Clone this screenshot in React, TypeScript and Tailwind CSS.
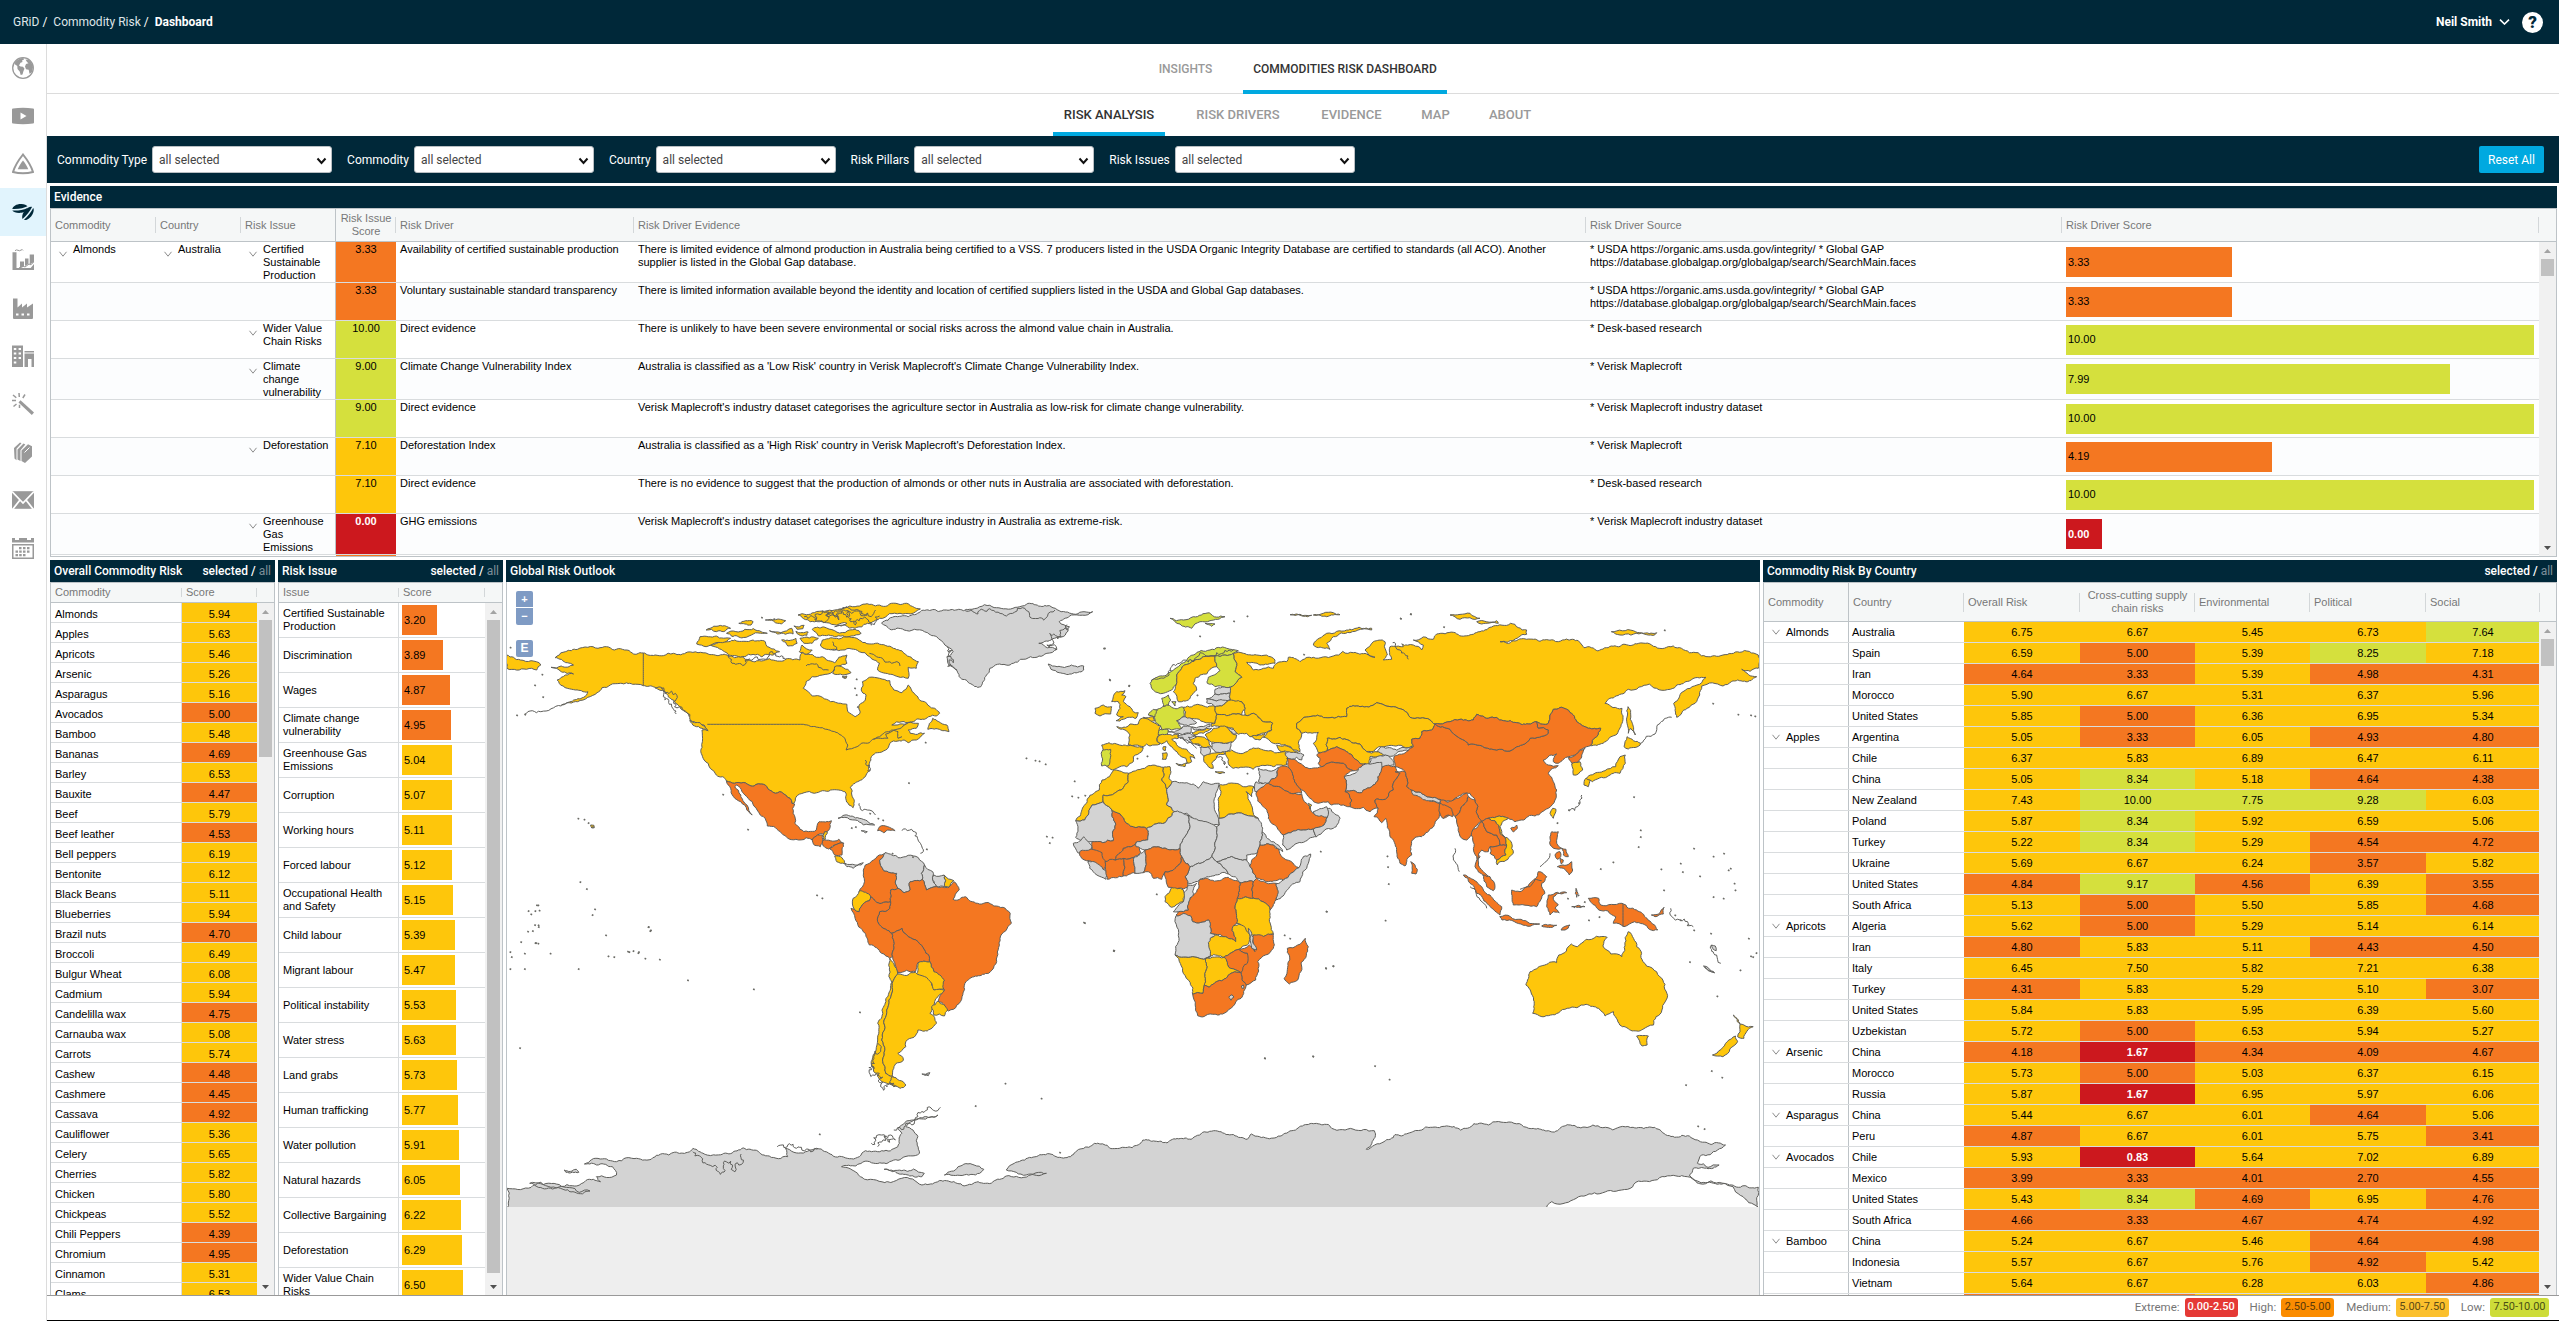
import React from "react";

/* ------------------------------------------------------------------ */
/* Score colours                                                       */
/* ------------------------------------------------------------------ */
const scoreBg = (v: number) =>
  v < 2.5 ? "bg-[#cc181e] text-white font-bold" : v <= 5 ? "bg-[#f47721]" : v <= 7.5 ? "bg-[#fec60b]" : "bg-[#d5e03d]";

/* ------------------------------------------------------------------ */
/* Data                                                                */
/* ------------------------------------------------------------------ */
type Ev = {
  h: "a" | "b";
  commodity?: string;
  country?: string;
  issue?: string;
  score: number;
  driver: string;
  text: string;
  source: string;
  value: number;
};

const evidence: Ev[] = [
  { h: "a", commodity: "Almonds", country: "Australia", issue: "Certified Sustainable Production", score: 3.33, driver: "Availability of certified sustainable production", text: "There is limited evidence of almond production in Australia being certified to a VSS. 7 producers listed in the USDA Organic Integrity Database are certified to standards (all ACO). Another supplier is listed in the Global Gap database.", source: "* USDA https://organic.ams.usda.gov/integrity/ * Global GAP https://database.globalgap.org/globalgap/search/SearchMain.faces", value: 3.33 },
  { h: "b", score: 3.33, driver: "Voluntary sustainable standard transparency", text: "There is limited information available beyond the identity and location of certified suppliers listed in the USDA and Global Gap databases.", source: "* USDA https://organic.ams.usda.gov/integrity/ * Global GAP https://database.globalgap.org/globalgap/search/SearchMain.faces", value: 3.33 },
  { h: "b", issue: "Wider Value Chain Risks", score: 10, driver: "Direct evidence", text: "There is unlikely to have been severe environmental or social risks across the almond value chain in Australia.", source: "* Desk-based research", value: 10 },
  { h: "a", issue: "Climate change vulnerability", score: 9, driver: "Climate Change Vulnerability Index", text: "Australia is classified as a 'Low Risk' country in Verisk Maplecroft's Climate Change Vulnerability Index.", source: "* Verisk Maplecroft", value: 7.99 },
  { h: "b", score: 9, driver: "Direct evidence", text: "Verisk Maplecroft's industry dataset categorises the agriculture sector in Australia as low-risk for climate change vulnerability.", source: "* Verisk Maplecroft industry dataset", value: 10 },
  { h: "b", issue: "Deforestation", score: 7.1, driver: "Deforestation Index", text: "Australia is classified as a 'High Risk' country in Verisk Maplecroft's Deforestation Index.", source: "* Verisk Maplecroft", value: 4.19 },
  { h: "b", score: 7.1, driver: "Direct evidence", text: "There is no evidence to suggest that the production of almonds or other nuts in Australia are associated with deforestation.", source: "* Desk-based research", value: 10 },
  { h: "a", issue: "Greenhouse Gas Emissions", score: 0, driver: "GHG emissions", text: "Verisk Maplecroft's industry dataset categorises the agriculture industry in Australia as extreme-risk.", source: "* Verisk Maplecroft industry dataset", value: 0 },
];

const commodities: [string, number][] = [
  ["Almonds", 5.94], ["Apples", 5.63], ["Apricots", 5.46], ["Arsenic", 5.26], ["Asparagus", 5.16], ["Avocados", 5.0],
  ["Bamboo", 5.48], ["Bananas", 4.69], ["Barley", 6.53], ["Bauxite", 4.47], ["Beef", 5.79], ["Beef leather", 4.53],
  ["Bell peppers", 6.19], ["Bentonite", 6.12], ["Black Beans", 5.11], ["Blueberries", 5.94], ["Brazil nuts", 4.7],
  ["Broccoli", 6.49], ["Bulgur Wheat", 6.08], ["Cadmium", 5.94], ["Candelilla wax", 4.75], ["Carnauba wax", 5.08],
  ["Carrots", 5.74], ["Cashew", 4.48], ["Cashmere", 4.45], ["Cassava", 4.92], ["Cauliflower", 5.36], ["Celery", 5.65],
  ["Cherries", 5.82], ["Chicken", 5.8], ["Chickpeas", 5.52], ["Chili Peppers", 4.39], ["Chromium", 4.95],
  ["Cinnamon", 5.31], ["Clams", 6.53],
];

const issues: [string, number][] = [
  ["Certified Sustainable Production", 3.2], ["Discrimination", 3.89], ["Wages", 4.87], ["Climate change vulnerability", 4.95],
  ["Greenhouse Gas Emissions", 5.04], ["Corruption", 5.07], ["Working hours", 5.11], ["Forced labour", 5.12],
  ["Occupational Health and Safety", 5.15], ["Child labour", 5.39], ["Migrant labour", 5.47], ["Political instability", 5.53],
  ["Water stress", 5.63], ["Land grabs", 5.73], ["Human trafficking", 5.77], ["Water pollution", 5.91],
  ["Natural hazards", 6.05], ["Collective Bargaining", 6.22], ["Deforestation", 6.29], ["Wider Value Chain Risks", 6.5],
];

const countries: [string, string, number[]][] = [
  ["Almonds", "Australia", [6.75, 6.67, 5.45, 6.73, 7.64]],
  ["", "Spain", [6.59, 5.0, 5.39, 8.25, 7.18]],
  ["", "Iran", [4.64, 3.33, 5.39, 4.98, 4.31]],
  ["", "Morocco", [5.9, 6.67, 5.31, 6.37, 5.96]],
  ["", "United States", [5.85, 5.0, 6.36, 6.95, 5.34]],
  ["Apples", "Argentina", [5.05, 3.33, 6.05, 4.93, 4.8]],
  ["", "Chile", [6.37, 5.83, 6.89, 6.47, 6.11]],
  ["", "China", [5.05, 8.34, 5.18, 4.64, 4.38]],
  ["", "New Zealand", [7.43, 10.0, 7.75, 9.28, 6.03]],
  ["", "Poland", [5.87, 8.34, 5.92, 6.59, 5.06]],
  ["", "Turkey", [5.22, 8.34, 5.29, 4.54, 4.72]],
  ["", "Ukraine", [5.69, 6.67, 6.24, 3.57, 5.82]],
  ["", "United States", [4.84, 9.17, 4.56, 6.39, 3.55]],
  ["", "South Africa", [5.13, 5.0, 5.5, 5.85, 4.68]],
  ["Apricots", "Algeria", [5.62, 5.0, 5.29, 5.14, 6.14]],
  ["", "Iran", [4.8, 5.83, 5.11, 4.43, 4.5]],
  ["", "Italy", [6.45, 7.5, 5.82, 7.21, 6.38]],
  ["", "Turkey", [4.31, 5.83, 5.29, 5.1, 3.07]],
  ["", "United States", [5.84, 5.83, 5.95, 6.39, 5.6]],
  ["", "Uzbekistan", [5.72, 5.0, 6.53, 5.94, 5.27]],
  ["Arsenic", "China", [4.18, 1.67, 4.34, 4.09, 4.67]],
  ["", "Morocco", [5.73, 5.0, 5.03, 6.37, 6.15]],
  ["", "Russia", [5.87, 1.67, 6.95, 5.97, 6.06]],
  ["Asparagus", "China", [5.44, 6.67, 6.01, 4.64, 5.06]],
  ["", "Peru", [4.87, 6.67, 6.01, 5.75, 3.41]],
  ["Avocados", "Chile", [5.93, 0.83, 5.64, 7.02, 6.89]],
  ["", "Mexico", [3.99, 3.33, 4.01, 2.7, 4.55]],
  ["", "United States", [5.43, 8.34, 4.69, 6.95, 4.76]],
  ["", "South Africa", [4.66, 3.33, 4.67, 4.74, 4.92]],
  ["Bamboo", "China", [5.24, 6.67, 5.46, 4.64, 4.98]],
  ["", "Indonesia", [5.57, 6.67, 5.76, 4.92, 5.42]],
  ["", "Vietnam", [5.64, 6.67, 6.28, 6.03, 4.86]],
  ["", "", [4.9, 4.9, 6, 4.9, 4.9]],
];

/* ------------------------------------------------------------------ */
/* World map                                                           */
/* ------------------------------------------------------------------ */
const Y = "#fec60b";
const O = "#f47721";
const L = "#d5e03d";
const G = "#d3d3d3";

type Frame = { sx: number; sy: number; ox: number; oy: number };
const frames: Record<string, Frame> = {
  A: { sx: 2.45, sy: 3, ox: 500, oy: 560 },
  B: { sx: 3, sy: 3, ox: 1100, oy: 600 },
  C: { sx: 2.376, sy: 3, ox: 1100, oy: 580 },
  D: { sx: 1.2444, sy: 3, ox: 500, oy: 900 },
};

const noise = (a: number, b: number) => {
  const s = Math.sin(a * 12.9898 + b * 78.233) * 43758.5453;
  return s - Math.floor(s) - 0.5;
};

type Pt = [number, number];

/* Midpoint displacement; the endpoints are ordered first, so that two
   countries which share a border get the same line. */
const split = (p: Pt, q: Pt, amp: number): Pt[] => {
  const len = Math.hypot(q[0] - p[0], q[1] - p[1]);
  if (len < 3) return [];
  const swap = p[0] > q[0] || (p[0] === q[0] && p[1] > q[1]);
  const [a, b] = swap ? [q, p] : [p, q];
  const n = noise(a[0] + b[0], a[1] + b[1]) * amp * 2;
  const m: Pt = [(a[0] + b[0]) / 2 - (b[1] - a[1]) * n, (a[1] + b[1]) / 2 + (b[0] - a[0]) * n];
  return [...split(p, m, amp), m, ...split(m, q, amp)];
};

const outline = (frame: string, pts: string, closed: boolean, amp: number) => {
  const f = frames[frame];
  const list: Pt[] = pts
    .trim()
    .split(/\s+/)
    .map((s) => {
      const [x, y] = s.split(",").map(Number);
      return [x / f.sx + f.ox, y / f.sy + f.oy] as Pt;
    });
  const out: Pt[] = [];
  const n = list.length;
  for (let i = 0; i < n; i++) {
    out.push(list[i]);
    if (i < n - 1 || closed) out.push(...split(list[i], list[(i + 1) % n], amp));
  }
  return "M" + out.map((p) => p[0].toFixed(1) + "," + p[1].toFixed(1)).join("L") + (closed ? "Z" : "");
};

/* [frame, fill, points] */
const lands: [string, string, string][] = [
  // North America
  ["A", Y, "140,288 160,275 190,268 215,262 240,265 280,270 320,276 351,279 380,285 400,287 425,280 460,276 485,278 510,282 545,284 575,293 610,300 640,303 660,296 700,297 735,300 735,290 740,278 755,283 775,292 790,290 800,300 820,308 830,292 850,285 850,310 830,318 815,335 790,345 765,350 750,365 743,385 755,395 765,408 790,412 810,425 835,430 850,433 852,455 870,470 882,460 880,435 895,420 897,405 885,390 888,365 905,352 930,355 955,362 965,390 985,398 1000,375 1015,400 1040,425 1065,445 1077,460 1070,468 1050,470 1020,478 985,485 960,495 1000,488 1025,490 1020,505 1000,510 1005,520 1040,520 1020,540 1000,548 990,540 975,543 955,550 945,570 925,578 910,590 905,610 905,632 895,650 870,670 858,682 862,705 868,725 865,743 855,735 847,715 845,695 830,690 810,690 790,692 770,700 745,698 725,712 720,730 715,730 700,705 685,695 675,700 660,690 645,673 615,678 575,670 555,663 545,650 530,645 515,625 500,600 493,580 496,545 495,510 508,510 500,495 480,488 465,478 460,460 440,440 425,420 405,395 380,382 351,377 325,373 295,370 270,375 250,383 238,398 215,412 190,425 150,436 205,412 215,395 185,390 165,385 145,370 140,360 160,345 180,342 150,335 125,322 150,318 180,315 165,308 135,293"],
  ["A", Y, "790,240 830,237 880,240 920,250 960,262 990,280 1025,305 1020,325 1000,322 1000,355 975,350 945,340 925,330 930,310 905,290 880,275 840,270 800,268 785,255"],
  ["A", Y, "515,255 545,245 575,240 620,240 650,245 655,260 685,275 670,285 640,290 600,290 560,285 550,275"],
  ["A", Y, "490,230 530,228 565,235 545,248 505,260 482,252"],
  ["A", Y, "730,165 770,158 820,150 870,140 950,137 1030,147 980,160 930,175 900,190 870,205 820,200 850,190 800,188 760,185"],
  ["A", Y, "765,208 820,212 870,208 885,220 860,228 780,228"],
  ["A", Y, "505,210 545,198 565,205 530,215"],
  ["A", Y, "555,220 600,208 640,215 655,220 610,228"],
  ["A", Y, "690,240 725,235 728,250 705,258"],
  ["A", Y, "735,235 780,235 765,250 745,250"],
  ["A", Y, "740,255 765,270 750,283 733,275"],
  ["A", Y, "650,180 700,182 690,192"],
  ["A", Y, "585,190 620,185 615,195"],
  ["A", Y, "660,212 715,205 718,222 680,222"],
  ["A", Y, "720,198 745,196 742,206 728,208"],
  ["A", Y, "725,214 755,216 752,226 732,224"],
  ["A", Y, "820,320 860,338 840,345 815,340"],
  ["A", Y, "838,350 850,348 848,355"],
  ["A", Y, "1060,475 1075,485 1095,495 1100,515 1080,510 1048,508"],
  ["A", Y, "465,480 490,488 510,512 495,505"],
  ["A", Y, "17,285 50,300 100,315 90,330 65,328 17,325"],
  ["A", Y, "222,795 230,796 231,803 225,804"],
  ["A", G, "935,190 1000,170 1030,155 1090,150 1150,148 1200,136 1290,133 1350,140 1370,152 1452,155 1400,165 1370,185 1395,200 1385,225 1350,240 1320,250 1365,268 1340,280 1300,290 1275,298 1240,315 1200,325 1192,345 1178,380 1150,370 1125,350 1100,315 1095,290 1110,275 1090,255 1070,230 1040,215 990,210 955,208"],
  ["A", G, "1343,312 1365,320 1400,315 1430,318 1430,330 1400,342 1370,338 1350,328"],
  ["A", O, "555,663 575,670 615,678 645,673 660,690 675,700 685,695 700,705 715,730 722,732 718,760 722,790 735,808 755,815 775,810 782,785 812,782 808,805 800,815 795,820 778,825 765,840 750,833 725,838 690,820 655,798 650,775 630,750 600,705 580,675 575,680 590,705 605,735 618,765 605,750 590,725 572,710 565,685"],
  ["A", O, "765,840 778,825 790,825 792,842 785,860 768,853"],
  ["A", Y, "795,815 802,815 797,838 792,838"],
  ["A", O, "790,842 830,838 842,850 820,855 805,867 792,858"],
  ["A", O, "808,867 820,855 842,850 838,885 820,885"],
  ["A", Y, "820,888 838,893 845,912 825,905"],
  ["A", G, "845,910 870,915 890,908 885,915 865,925 850,920"],
  ["A", G, "828,775 845,765 880,775 918,795 890,795 870,780 845,772"],
  ["A", O, "930,800 950,800 968,812 940,818 925,812"],
  ["A", G, "885,812 900,815 895,819"],
  // South America
  ["A", O, "945,878 925,888 915,900 895,915 890,930 893,965 880,995 908,1010 935,1030 957,1025 957,990 975,985 972,940 940,932 930,900"],
  ["A", G, "945,878 930,900 940,932 972,940 975,985 990,998 1005,990 1005,965 1035,958 1032,940 1040,915 1025,893 975,893 960,885"],
  ["A", G, "1040,915 1060,935 1060,955 1070,980 1045,990 1035,958 1032,940"],
  ["A", G, "1063,945 1088,945 1090,980 1070,980 1060,960"],
  ["A", Y, "1088,945 1112,962 1100,982 1090,980"],
  ["A", Y, "880,993 908,1010 905,1022 885,1040 880,1055 868,1048 865,1015"],
  ["A", O, "957,990 975,985 990,998 1005,990 1005,965 1035,958 1045,990 1070,980 1100,982 1112,965 1125,990 1110,1018 1140,1010 1170,1030 1210,1038 1250,1060 1253,1090 1225,1135 1218,1190 1197,1240 1142,1265 1132,1310 1099,1353 1073,1325 1089,1290 1063,1235 1053,1205 1040,1170 1024,1145 1000,1130 985,1105 960,1120 945,1108 925,1085 930,1055 955,1045 957,1025"],
  ["A", O, "905,1022 908,1010 935,1030 957,1025 955,1045 930,1055 925,1085 945,1108 960,1120 965,1145 962,1190 955,1195 935,1180 905,1155 895,1120 870,1075 860,1045 868,1048 880,1055 885,1040"],
  ["A", O, "960,1120 985,1105 1000,1130 1024,1145 1040,1170 1053,1205 1024,1208 1018,1235 975,1238 968,1215 962,1190 965,1145"],
  ["A", Y, "1024,1208 1053,1205 1063,1235 1089,1260 1087,1287 1063,1290 1058,1270 1018,1245"],
  ["D", Y, "485,175 490,190 495,222 488,250 484,300 478,360 475,420 476,480 480,520 488,528 500,555 490,560 475,545 465,515 463,480 468,450 470,420 470,370 480,300 484,230"],
  ["D", Y, "495,222 517,217 537,250 540,270 553,270 545,290 538,320 535,340 543,370 535,388 520,390 515,412 505,425 505,440 495,460 502,480 490,505 488,528 480,520 476,480 475,420 478,360 484,300 488,250"],
  ["D", Y, "545,303 557,330 553,348 540,345 537,320"],
  ["D", Y, "488,530 505,555 498,565 485,550"],
  ["D", G, "525,522 535,518 533,527"],
  // Russia and the far north
  ["B", Y, "1446,135 1452,143 1534,138 1616,130 1667,140 1768,158 1869,165 1919,157 1975,165 1975,205 1925,208 1970,230 1894,245 1869,258 1805,258 1799,285 1761,325 1730,352 1721,310 1749,275 1805,248 1818,232 1768,243 1730,255 1711,268 1585,268 1515,310 1566,325 1566,370 1547,405 1509,430 1471,437 1490,410 1502,385 1465,385 1430,365 1420,345 1400,328 1360,328 1350,345 1345,370 1310,365 1285,372 1250,368 1210,362 1165,355 1130,343 1120,360 1080,358 1050,365 1020,372 1005,372 990,360 930,352 880,320 830,308 780,320 740,325 740,350 690,353 640,348 590,370 590,385 605,400 595,430 600,455 580,450 545,435 520,430 500,415 490,412 500,400 515,390 518,370 490,365 460,340 435,345 435,325 425,305 390,300 390,265 405,252 425,232 405,215 410,190 400,160 430,160 470,165 525,180 525,190 480,195 440,187 460,210 490,205 520,205 530,190 560,185 565,172 600,185 640,172 700,168 760,158 800,162 825,172 795,150 820,125 855,125 855,145 862,165 850,180 875,178 868,150 870,140 910,140 905,132 940,135 965,150 970,135 940,120 1000,118 1010,102 1060,97 1140,95 1180,78 1280,90 1280,103 1200,125 1280,118 1360,120 1375,125 1400,117 1435,122"],
  ["B", Y, "640,135 680,100 740,90 815,85 815,90 750,98 700,110 680,130 690,148 650,142"],
  ["B", Y, "1050,45 1110,40 1140,55 1080,58"],
  ["B", Y, "1130,65 1190,62 1195,70 1145,72"],
  ["B", Y, "1534,95 1600,92 1625,99 1560,105"],
  ["B", Y, "1625,99 1670,98 1665,104 1640,104"],
  ["B", Y, "1584,320 1597,370 1606,405 1592,385 1585,400 1581,370"],
  ["B", L, "210,55 250,60 280,50 375,50 330,62 300,65 275,85 240,72"],
  ["B", L, "315,70 345,72 335,79"],
  ["B", Y, "640,45 700,38 720,44 680,50"],
  ["B", Y, "570,44 600,43 635,46 610,49"],
  // Europe
  ["B", L, "155,240 200,225 240,195 280,165 330,150 380,145 415,152 400,160 375,165 345,168 310,170 275,185 245,205 230,225 228,255 215,270 190,280 160,270 150,250"],
  ["B", Y, "310,170 345,168 350,200 330,208 320,222 285,235 280,250 290,270 275,285 265,300 245,305 235,305 220,275 228,255 230,225 245,205 275,185"],
  ["B", L, "345,168 375,165 400,160 410,190 405,215 425,232 405,252 345,260 322,250 325,232 360,212 350,200"],
  ["B", L, "185,295 205,285 212,300 205,315 190,320"],
  ["B", L, "215,305 228,305 225,318"],
  ["B", G, "345,268 390,262 390,280 345,282"],
  ["B", G, "320,296 345,282 390,280 390,300 350,303"],
  ["B", G, "320,308 320,296 350,303 385,302 365,318 345,320"],
  ["B", Y, "345,320 365,318 385,302 425,305 435,325 425,345 380,347 350,343"],
  ["B", Y, "250,322 300,315 345,320 350,343 345,370 310,365 255,350"],
  ["B", L, "165,330 200,315 215,322 250,322 252,350 230,362 245,385 215,390 185,388 178,375 165,360"],
  ["B", L, "145,345 160,328 172,330 165,350"],
  ["B", Y, "130,352 160,350 165,362 150,365"],
  ["B", G, "230,362 252,350 290,368 265,378 240,372"],
  ["B", G, "205,395 240,388 250,378 275,382 270,400 225,400"],
  ["B", G, "275,380 330,372 330,380 280,388"],
  ["B", L, "170,400 180,388 205,390 200,405 175,405"],
  ["B", Y, "50,380 85,378 90,372 115,372 120,358 135,355 165,370 183,378 175,400 172,425 180,432 150,438 140,432 130,440 85,435 90,405 75,390"],
  ["B", Y, "5,435 50,432 85,437 130,443 125,455 100,470 100,485 80,500 50,505 38,510 20,498 25,460 10,450"],
  ["B", L, "8,450 32,448 25,498 5,498 5,470"],
  ["B", Y, "40,290 50,275 75,272 65,285 78,290 70,305 90,320 100,335 115,338 108,355 70,358 48,362 70,350 50,345 60,325 55,305 35,305"],
  ["B", Y, "-15,325 10,315 35,320 32,342 0,348 -15,340"],
  ["B", Y, "172,425 175,408 200,403 235,402 235,415 215,418 235,440 280,465 285,475 270,470 275,485 262,490 258,475 235,462 215,440 200,422 185,432"],
  ["B", Y, "228,490 262,488 255,500"],
  ["B", Y, "187,460 200,458 198,478 187,478"],
  ["B", Y, "190,440 198,440 196,452 190,450"],
  ["B", Y, "335,370 345,370 350,343 380,347 425,345 435,345 460,340 490,365 518,370 515,390 485,400 470,405 465,412 450,410 440,400 415,403 400,385 370,382 335,380"],
  ["B", Y, "455,408 485,405 495,400 480,420 465,418"],
  ["B", Y, "275,398 320,385 335,385 310,400 285,405"],
  ["B", Y, "315,405 340,385 385,382 395,400 410,405 400,425 345,428 325,420"],
  ["B", G, "380,382 400,388 410,400 400,402"],
  ["B", G, "335,430 345,428 395,425 390,450 345,455 335,445"],
  ["B", G, "232,408 270,400 290,410 265,412 285,432 300,438 290,430 260,420 240,415"],
  ["B", Y, "268,418 300,410 325,420 335,440 315,445 298,432 280,432"],
  ["B", G, "300,442 330,445 330,460 312,470 302,460"],
  ["B", Y, "312,468 335,460 370,455 375,462 350,468 345,480 335,490 340,505 325,500 312,485"],
  ["B", Y, "345,515 375,518 360,521"],
  ["B", Y, "375,455 395,450 410,458 450,448 490,450 520,455 555,455 565,470 560,495 520,500 470,500 460,508 430,502 400,505 385,490 380,470"],
  ["B", Y, "530,435 575,445 595,458 580,462 545,455"],
  ["B", G, "555,460 590,458 612,465 605,480 590,472 575,478 560,470"],
  // Central and western Asia
  ["B", Y, "605,400 590,385 590,370 640,348 690,353 740,350 740,325 780,320 830,308 880,320 930,352 990,360 1005,372 995,390 965,395 960,415 935,418 940,440 880,437 840,440 825,450 800,455 780,432 755,428 720,412 682,415 682,452 655,458 640,430 650,412 655,397 630,398"],
  ["B", Y, "682,452 682,415 720,412 755,428 780,432 800,455 830,455 860,455 850,465 810,470 805,495 770,480 740,455 710,440"],
  ["B", O, "655,460 682,452 710,440 740,455 770,480 805,495 785,510 760,512 730,490 700,487 665,500 655,490 660,475 650,465"],
  ["B", G, "830,455 845,440 935,438 925,452 880,468 850,465"],
  ["B", G, "805,495 812,475 870,472 882,495 845,500 820,498"],
  ["B", G, "735,575 733,530 765,520 790,495 845,487 840,520 815,560 790,570 785,578"],
  ["B", O, "735,575 785,578 790,570 815,560 840,520 848,500 885,500 900,520 880,550 880,570 860,595 825,600 835,625 810,635 790,622 750,620 755,600"],
  ["B", O, "560,475 575,478 600,490 615,502 665,500 700,487 730,490 760,512 733,530 735,575 755,600 750,620 695,615 685,605 655,610 630,595 610,572 590,555 575,515 565,500"],
  ["B", O, "530,510 545,498 562,500 575,515 590,555 605,580 585,580 545,565 505,550 530,530"],
  ["B", G, "475,505 535,502 530,530 505,550 475,545"],
  ["B", G, "468,545 505,550 485,565 478,578 465,575"],
  ["B", O, "468,580 490,560 505,550 545,565 585,580 605,582 620,610 640,640 682,652 672,675 640,687 610,690 550,705 530,680 505,655 490,620"],
  ["B", G, "550,705 610,690 640,687 650,710 560,750 548,735"],
  ["B", G, "650,710 640,687 672,675 682,652 680,625 690,625 720,655 700,685"],
  ["B", G, "640,635 680,620 682,652 645,645"],
  ["B", Y, "625,610 635,615 630,628"],
  ["B", O, "885,515 915,515 920,560 935,570 970,595 1020,610 1025,595 1060,600 1100,578 1105,590 1085,620 1065,650 1050,640 1030,655 1020,625 1018,650 1005,665 955,710 937,720 935,765 915,798 900,790 870,710 857,655 845,668 822,650 835,625 825,600 860,595 880,570 880,550 900,520"],
  ["B", O, "1020,610 1055,628 1058,650 1045,645 1030,655 1020,640"],
  ["B", G, "935,570 1020,598 1018,610 980,602 940,585"],
  ["B", G, "1030,595 1055,597 1045,607"],
  ["B", O, "932,785 952,808 948,822 935,820"],
  ["B", O, "1005,372 1050,388 1075,412 1105,435 1190,450 1250,440 1290,415 1345,400 1345,390 1315,385 1310,365 1345,370 1350,345 1360,328 1400,328 1420,345 1430,365 1465,385 1502,385 1490,410 1471,437 1450,445 1430,462 1405,470 1375,490 1360,485 1370,462 1330,480 1345,495 1375,497 1345,520 1360,545 1370,570 1365,600 1345,625 1305,648 1265,660 1245,665 1225,655 1190,650 1165,655 1145,665 1130,640 1125,600 1110,580 1090,580 1060,600 1020,598 935,570 920,560 915,515 885,500 882,470 925,452 940,440 935,418 960,415 965,395 995,390"],
  ["B", O, "1020,372 1050,365 1080,358 1120,360 1130,343 1165,355 1210,362 1250,368 1285,372 1310,365 1315,385 1345,390 1345,400 1290,415 1250,440 1190,450 1105,435 1075,412 1050,388 1005,372"],
  ["B", O, "1405,472 1430,462 1455,445 1445,465 1435,485 1415,490 1408,480"],
  ["B", Y, "1415,492 1440,485 1448,510 1435,522 1420,525"],
  ["B", Y, "1576,465 1576,490 1560,520 1522,530 1477,545 1458,540 1471,525 1515,512 1547,500 1560,470"],
  ["B", Y, "1581,410 1622,430 1585,447 1572,440"],
  ["B", Y, "1458,535 1471,540 1465,560 1452,555"],
  ["B", Y, "1358,625 1368,628 1360,655 1350,640"],
  ["B", O, "1232,685 1250,675 1252,685 1240,696"],
  // South-east Asia
  ["B", O, "1105,590 1125,600 1130,640 1145,665 1125,680 1118,690 1130,720 1140,770 1130,790 1120,700 1100,720 1085,715 1065,650 1085,620"],
  ["B", O, "1118,690 1145,665 1160,695 1190,705 1200,735 1170,740 1165,755 1145,750 1135,770 1135,795 1155,820 1165,830 1150,828 1125,800 1130,770 1118,720"],
  ["B", O, "1145,665 1165,655 1185,662 1200,695 1220,735 1200,735 1190,705 1160,695"],
  ["B", O, "1170,740 1200,735 1220,735 1218,765 1190,780 1170,760"],
  ["B", Y, "1165,655 1190,650 1225,655 1200,680 1205,700 1235,730 1240,760 1200,785 1192,795 1190,780 1218,765 1220,735 1200,695 1185,662"],
  ["B", O, "1150,825 1170,830 1185,860 1180,872 1160,860"],
  ["B", O, "1090,825 1130,845 1170,885 1205,920 1200,945 1160,910 1130,880 1110,850"],
  ["B", O, "1199,950 1263,958 1319,972 1263,972 1206,960"],
  ["B", O, "1235,870 1260,875 1290,850 1315,815 1340,830 1325,850 1335,880 1310,920 1240,915"],
  ["B", O, "1345,885 1400,878 1360,890 1375,915 1365,925 1378,938 1360,935 1350,945 1340,920"],
  ["B", O, "1355,695 1375,695 1370,730 1385,745 1355,740 1350,715"],
  ["B", O, "1365,765 1380,755 1382,770 1372,778"],
  ["B", O, "1385,745 1398,748 1405,770 1390,765"],
  ["B", O, "1380,775 1390,780 1384,792"],
  ["B", O, "1372,800 1415,785 1418,810 1408,825 1390,805"],
  ["B", O, "1325,978 1350,974 1370,976 1345,982"],
  ["B", O, "1383,990 1410,975 1395,990"],
  ["B", O, "1465,895 1496,895 1502,915 1566,910 1610,930 1641,955 1673,990 1648,988 1604,965 1572,980 1540,970 1547,950 1496,930 1471,905"],
  ["B", O, "1654,945 1680,938 1692,922 1690,942 1665,950"],
  ["B", O, "1428,865 1434,880 1430,892 1426,880"],
  ["B", O, "1415,920 1435,916 1455,920 1435,922"],
  // Oceania
  ["C", Y, "1022,1175 1085,1148 1090,1125 1120,1092 1135,1100 1155,1078 1205,1072 1195,1098 1240,1130 1255,1055 1275,1100 1290,1145 1330,1190 1347,1240 1335,1290 1315,1335 1290,1348 1235,1335 1220,1295 1200,1308 1185,1285 1155,1273 1110,1285 1090,1298 1050,1310 1028,1300 1030,1260 1012,1215"],
  ["C", Y, "1275,1368 1303,1368 1300,1395 1288,1398"],
  ["C", Y, "1505,1305 1530,1335 1552,1340 1530,1375 1515,1370 1520,1340"],
  ["C", Y, "1510,1368 1515,1385 1480,1430 1455,1425 1490,1385"],
  ["C", G, "1434,1158 1445,1163 1460,1178 1445,1172"],
  ["C", G, "1453,1095 1462,1098 1464,1112 1456,1106"],
  // Africa
  ["B", Y, "43,510 86,520 85,545 10,585 10,605 -24,615 -46,660 -73,662 -37,595 -2,570 6,540"],
  ["B", G, "-73,662 -46,660 -24,615 10,605 32,625 40,722 -24,725 -40,728 -73,712"],
  ["B", G, "-80,730 -49,710 -24,740 -30,755 -67,758"],
  ["B", O, "32,625 140,685 143,720 108,728 70,745 45,780 10,785 -5,765 -20,758 -24,740 -24,725 40,722"],
  ["B", O, "-61,755 6,758 18,790 12,810 -24,785 -55,775"],
  ["B", G, "-37,785 -18,785 18,815 18,838 -31,805"],
  ["B", O, "15,785 45,780 72,775 70,828 22,838 18,815"],
  ["B", O, "45,780 70,745 108,728 122,758 102,772 72,775"],
  ["B", O, "72,775 102,772 105,820 70,828"],
  ["B", G, "102,772 135,750 130,818 105,820"],
  ["B", Y, "86,520 140,500 190,502 185,540 200,568 200,615 222,635 140,685 32,625 10,605 10,585 85,545"],
  ["B", Y, "190,502 210,500 212,520 207,535 217,545 200,568 185,540"],
  ["B", G, "217,545 260,548 295,565 310,545 358,550 358,675 260,640 222,635 200,615 200,568"],
  ["B", Y, "358,555 430,560 462,560 455,590 438,575 475,655 358,655"],
  ["B", G, "140,685 222,635 262,645 262,700 240,745 180,742 135,750 108,740 108,728 143,720"],
  ["B", G, "262,645 350,680 350,715 335,770 270,800 245,770 240,745 262,700"],
  ["B", G, "358,655 475,655 487,695 480,735 470,760 440,765 440,780 350,785 335,770 350,715 350,680 358,675"],
  ["B", G, "255,830 270,800 335,770 350,785 385,822 300,838 265,850"],
  ["B", G, "350,785 440,780 450,800 470,835 460,845 420,848 385,822"],
  ["B", O, "135,750 180,742 240,745 245,770 225,805 195,815 185,838 160,835 145,815 130,818"],
  ["B", O, "245,770 270,800 255,830 265,860 205,862 195,830 195,815 225,805"],
  ["B", G, "487,695 515,725 548,755 520,735 480,735"],
  ["B", O, "480,735 520,735 545,770 597,803 550,840 505,845 470,835 450,800"],
  ["B", G, "610,770 632,762 625,790 600,845 530,900 528,850 550,840 597,803"],
  ["B", O, "460,845 470,835 528,850 528,895 510,930 460,895"],
  ["B", O, "420,848 460,845 460,895 412,895"],
  ["B", O, "300,838 385,832 420,848 412,895 405,925 410,970 398,980 407,1025 372,1010 331,1000 326,960 278,965 271,947 228,945 235,935 265,930 280,885"],
  ["B", G, "220,935 250,905 250,880 265,855 290,850 280,885 265,930 235,935"],
  ["B", Y, "195,890 215,862 250,870 250,905 215,922 195,905"],
  ["B", G, "228,947 271,947 278,965 326,960 331,1000 347,1005 331,1015 331,1070 225,1065 237,1015"],
  ["B", Y, "331,1015 347,1005 372,1010 407,1025 398,980 436,975 448,1000 442,1035 417,1048 372,1072 331,1068"],
  ["B", Y, "412,895 460,895 510,930 512,975 520,1002 455,1005 410,970 405,925"],
  ["B", O, "461,1005 520,1002 520,1045 473,1085 467,1140 439,1155 423,1118 442,1060 417,1048 448,1035 465,1055"],
  ["B", G, "445,985 455,1000 470,1050 455,1045"],
  ["B", O, "372,1072 417,1048 442,1060 442,1090 423,1118 391,1105"],
  ["B", Y, "316,1075 372,1072 391,1105 423,1118 398,1118 328,1162 313,1155"],
  ["B", Y, "225,1065 331,1070 316,1075 313,1155 309,1180 278,1183 250,1120"],
  ["B", O, "278,1183 309,1180 313,1155 328,1162 398,1118 423,1118 439,1155 423,1195 372,1240 293,1247"],
  ["B", G, "386,1192 396,1184 402,1191 393,1201"],
  ["B", G, "424,1158 430,1155 432,1164 427,1166"],
  ["B", O, "616,1015 625,1040 593,1140 568,1152 552,1135 562,1045 593,1035"],
  // Antarctica
  ["D", G, "9,924 9,865 112,873 75,865 37,850 90,857 125,845 120,830 145,825 140,800 105,792 145,785 170,775 210,765 270,765 335,768 358,770 355,745 400,747 475,752 495,740 500,700 495,685 515,660 545,645 505,680 520,710 522,760 500,775 460,785 425,800 445,820 500,835 525,855 560,845 595,845 630,828 680,820 630,810 640,790 710,770 740,730 800,720 860,718 930,718 935,702 955,715 990,690 1020,672 1035,685 1088,692 1085,730 1078,748 1100,725 1130,700 1160,682 1230,675 1280,685 1340,682 1360,675 1410,682 1480,708 1490,720 1525,735 1515,750 1495,765 1490,790 1517,795 1485,805 1480,825 1490,843 1530,855 1566,862 1566,924"],
  ["D", G, "553,825 570,800 590,795 602,808 597,820"],
  ["D", G, "478,808 500,812 528,820 525,830 495,820"],
  ["D", G, "80,810 95,808 98,817 82,817"],
];

const borders: [string, string, number][] = [
  ["A", "351,279 351,377", 0],
  ["A", "508,493 743,493", 0],
  ["A", "743,493 760,499 790,503 820,515 845,535 852,555 848,570 875,560 885,550 905,548 930,530 960,510 975,515 975,535 985,530", 0.1],
  ["A", "915,538 950,535 945,522 965,510 1000,488", 0.1],
  ["A", "60,463 100,455 150,438", 0.2],
  ["A", "380,385 400,410 420,432 432,462", 0.4],
  ["A", "395,385 425,425 440,440 465,470", 0.5],
  ["A", "880,730 900,750 920,765", 0.4],
  ["A", "985,812 1020,818 1030,850 1030,880", 0.4],
  ["A", "1095,260 1105,290 1120,330", 0.6],
  ["A", "1390,195 1375,230 1340,255 1360,270", 0.6],
  ["A", "745,170 800,165 850,172 900,160", 0.5],
  ["A", "770,178 830,180 880,182 930,168", 0.5],
  ["A", "800,155 860,150 920,150", 0.4],
  ["A", "560,285 610,296 650,298 700,300", 0.4],
  ["A", "750,318 780,322 805,330", 0.4],
  ["A", "905,280 940,300 980,318", 0.4],
  ["A", "815,245 825,262 810,268", 0.4],
  ["A", "895,600 905,615 900,632", 0.5],
  ["A", "1140,152 1200,146 1280,143 1360,150", 0.3],
  ["B", "155,240 205,215 250,180 300,158 400,150", 0.4],
  ["B", "878,128 900,150 925,178", 0.4],
  ["B", "1320,800 1350,760", 0.2],
  ["B", "1260,868 1290,860 1305,838 1325,842", 0.1],
  ["B", "1569,912 1569,980", 0],
  ["B", "1622,430 1665,402 1715,352", 0.2],
  ["B", "1405,630 1445,585", 0.3],
  ["B", "1065,745 1068,790 1078,815", 0.2],
  ["B", "1110,860 1140,900 1160,925", 0.2],
  ["B", "1712,925 1740,960 1780,980", 0.3],
  ["B", "350,470 365,480 372,495", 0.5],
  ["B", "240,412 262,430 290,445", 0.4],
  ["C", "1453,1095 1465,1125 1475,1150", 0.3],
  ["C", "1435,1160 1460,1178", 0.2],
  ["D", "470,430 465,470 472,520 490,560", 0.6],
  ["D", "490,690 520,650 548,622", 0.4],
  ["D", "462,730 480,712 492,720 470,740", 0.5],
  ["D", "240,755 300,762", 0.5],
  ["D", "345,740 375,742 395,748", 0.5],
];

/* Small islands drawn as specks. */
const specks: [string, string][] = [
  ["A", "24,262 84,375 104,410 190,775 205,778 215,788 226,800 545,703 606,808 195,965 211,986 92,1035 95,1051 68,1052 231,1047 225,1064 84,1094 93,1100 258,1125 362,1100 368,1110 85,1148 92,1150 50,1145 27,1190 312,1174 325,1172 337,1178 278,1190 775,1005 788,1014 1000,668 1288,594 1310,601 1320,603 1335,612 1406,663 1400,708 1415,712 1432,706 1338,829 1352,832 1345,848 1429,1087 1502,1171 1480,264 1492,358 1540,376 1041,547 905,760 925,775 937,780 860,803 870,800 960,880 1010,890 1044,867 842,352 872,357 102,343 60,463 40,465 868,384 872,404 875,440 640,172 670,176"],
  ["B", "10,145 28,240 85,257 298,108 440,48 400,63 900,55 930,42 860,768 862,800 864,851 168,882 677,934 110,475 140,468 440,520 660,754 1435,608 1405,630 1370,668 1030,80 1600,590 1690,870 1740,790 1890,805 1780,745 1870,760 610,163 290,285 370,488 378,500"],
  ["C", "1283,750 1283,770 1278,800 1332,867 1383,875 1424,888 1506,910 1508,930 1480,955 1456,950 1492,870 1456,829 1218,846 1188,866 737,101 713,115 1340,150 1455,370 1515,403 1545,405 1555,408 1540,1075 1520,1170 1400,1145 1465,1248 1550,1130 1558,1118 1545,1128 1450,1060 1410,1050 1395,1035 1378,1020 1365,1005 437,1065 450,1075 535,1163 553,1158 32,1111 390,1434 505,1429 1110,955 1130,930 1135,945 1140,980 1160,1020 1185,1010 1125,980 1150,965"],
  ["D", "45,15 43,32 38,42 47,75 40,92 34,94 184,80 186,92 44,128 30,160 12,155 62,160 134,168 160,155 172,155 180,175 198,178 97,206 30,206 12,206 233,240 315,267 447,336 24,443 530,522 628,550 591,617 673,595 397,702 1088,497 1106,538 951,474 1011,468 1475,554 1507,512 1520,532 1490,678 1498,686 696,757 1027,205 1036,197 1101,61 1028,34 727,68 763,152"],
];

const WorldMap = () => (
  <svg className="block h-[625px] w-[1252px] bg-white" viewBox="507 582 1252 625">
    <g stroke="#5f5f5c" strokeWidth="1" strokeLinejoin="round">
      {lands.map(([f, fill, pts], i) => (
        <path key={i} fill={fill} d={outline(f, pts, true, 0.15)} />
      ))}
      {borders.map(([f, pts, amp], i) => (
        <path key={i} fill="none" d={outline(f, pts, false, amp)} />
      ))}
    </g>
    {specks.map(([f, pts], i) => (
      <path
        key={i}
        stroke="#6b6b66"
        strokeWidth="1.6"
        fill="none"
        d={pts
          .split(" ")
          .map((s) => {
            const [x, y] = s.split(",").map(Number);
            const fr = frames[f];
            return "M" + (x / fr.sx + fr.ox).toFixed(1) + "," + (y / fr.sy + fr.oy).toFixed(1) + "l1.6,0.8";
          })
          .join("")}
      />
    ))}
  </svg>
);

/* ------------------------------------------------------------------ */
/* Icons                                                               */
/* ------------------------------------------------------------------ */
const icons: React.ReactNode[] = [
  <g key="globe">
    <circle cx="11" cy="11" r="10.3" fill="none" stroke="currentColor" strokeWidth="1.3" />
    <path d="M3 5.500C5 2.500 8.500 1 11.500 1l.5 1.500-2 1 .5 1.500-2 .8L7 8.500l1.500 1 2.500.2 1.500 2-1 2.300-1 3.500-1.800.5-1-3.500-2.200-2.500L5.300 9 2.500 7z" />
    <path d="M13.500 2.500l3 .2 3 3 1.500 4.500-1 5-2.500 1.500-.8-4-2.700-.5-1-2.700 1-2.500 2.500-.7-1.500-1.300z" />
  </g>,
  <path key="play" fillRule="evenodd" d="M1 3.500Q11 2 21 3.500q1 0 1 1v13q0 1-1 1-10 1.400-20 0-1 0-1-1v-13q0-1 1-1zM8.500 7.500v7l6-3.500z" />,
  <g key="triangle">
    <path d="M11 1.500c4 5 8 11 10 17.500-6 1.500-14 1.500-20 0C3 12.500 7 6.500 11 1.500z" fill="none" stroke="currentColor" strokeWidth="2" />
    <path d="M11 7.500c2.200 2.800 4 5.600 5.300 8.700H5.700C7 13.100 8.800 10.300 11 7.500z" />
  </g>,
  <g key="beans">
    <path d="M.3 8C1 5 5 2.700 9.500 3c3 .2 5 1 6 2.300-3.500 1.600-8 3-15.200 2.700z" />
    <path d="M.3 9.500C6 9.800 11 9 15.500 7c-.7 2.700-3 4.500-6 4.800-4 .5-8-.3-9.200-2.300z" />
    <path d="M10.500 18c-1.300-3.200 1-8.500 5.500-11.200 1.800-1 3-1.200 4-.8-2 3.800-5 8-9.500 12z" />
    <path d="M12 18.800c4-3.600 7.200-7.600 9.200-11.800 1.500 2-.2 7.200-4 10.300-1.900 1.500-3.700 2.200-5.200 1.500z" />
  </g>,
  <g key="chart">
    <path d="M.5 3.200h4V21h-4zM1 21v-2h20v2zM8 12.500h4v5l-4 2zM13 9.500h3.500V15L13 17zM17.700 5.500H22V13l-4.300 2.500zM22 15v6h-5z" />
    <path d="M3 1.700q1.500-1.400 3-.4t3-.2 2 .3M6 20l4-3.500 3 1.500 4-3 2 .8 3-3.300" fill="none" stroke="currentColor" strokeWidth="1" />
  </g>,
  <path key="factory" fillRule="evenodd" d="M1 1.500h4.500v9l4.500-4v4l5-4v4l6-4V21q0 1-1 1H2q-1 0-1-1zM4 16.500v2h2.500v-2zm5.500 0v2H12v-2zm5.500 0v2h2.500v-2z" />,
  <path key="city" fillRule="evenodd" d="M0 .5h11V22H0zM1.800 3v2h2.500V3zm4.800 0v2H9V3zM1.800 7.500v2h2.500v-2zm4.800 0v2H9v-2zM1.800 12v2h2.500v-2zm4.800 0v2H9v-2zM1.800 16.500v2h2.500v-2zM12.500 6H22v1.500h-9.500zM12.500 8.500H22V22h-2.500v-8H16v8h-3.500z" />,
  <g key="wand">
    <path d="M8.500 7.300L22 19.500 19.800 22 6.500 9.600z" />
    <path d="M7 0l.3 4M13 1.500l-2.200 3.500M1 2l3.300 2.800M0 7.500h4M1.500 13.500L4.500 11M7.500 15v-3.300" stroke="currentColor" strokeWidth="1.500" fill="none" />
  </g>,
  <g key="books">
    <path d="M2 7l6-5.500 1.500.8-5 5.500v11.500l-2-1.700z" />
    <path d="M5.500 8.500l6-6 1.800 1L8.500 9.200V20l-3-1.500z" />
    <path d="M9.500 9.500L16 3.200l4 2v10.300L13 22l-3.500-2z" />
    <path d="M12.500 11.500l5-5" stroke="#fff" strokeWidth="1" />
  </g>,
  <g key="mail">
    <path d="M0 2.200h22v17.600H0z" />
    <path d="M0 2.500l11 11.500L22 2.500M.5 20.500L8 11M21.500 20.500L14 11" stroke="#fff" strokeWidth="1.800" fill="none" />
  </g>,
  <g key="calendar">
    <path fillRule="evenodd" d="M0 1h3v2h4V1h8v2h4V1h3v4.500H0zM0 7h22v15H0zM1.500 8.500v12h19v-12z" />
    <path d="M7 10h2.500v2.300H7zm4 0h2.500v2.300H11zm4 0h2.500v2.300H15zM3.500 13.500H6v2.300H3.500zm3.700 0h2.500v2.300H7.200zm3.800 0h2.500v2.300H11zm4 0h2.500v2.300H15zM3.500 17H6v2.300H3.500zm3.700 0h2.500v2.300H7.200zm3.800 0h2.500v2.300H11z" />
  </g>,
];

const Chevron = ({ className }: { className?: string }) => (
  <svg className={"h-[6px] w-[10px] shrink-0 " + (className ?? "")} viewBox="0 0 10 6" fill="none" stroke="#8d8d8d" strokeWidth="1">
    <path d="M1.500 .8L5 5.200 8.500 .8" />
  </svg>
);

const Arrow = ({ up }: { up?: boolean }) => (
  <div className="flex h-[17px] w-full shrink-0 items-center justify-center">
    <svg className="h-[4px] w-[7px]" viewBox="0 0 7 4">
      <path d={up ? "M0 4L3.500 0 7 4z" : "M0 0L3.500 4 7 0z"} fill={up ? "#a3a3a3" : "#505050"} />
    </svg>
  </div>
);

const Scrollbar = ({ thumb }: { thumb: string }) => (
  <div className="flex w-[17px] shrink-0 flex-col items-center justify-between bg-[#f1f1f1]">
    <div className="flex w-full flex-col items-center">
      <Arrow up />
      <div className={"w-[13px] bg-[#c1c1c1] " + thumb} />
    </div>
    <Arrow />
  </div>
);

/* ------------------------------------------------------------------ */
/* Building blocks                                                     */
/* ------------------------------------------------------------------ */
const PanelTitle = ({ title, toggle }: { title: string; toggle?: boolean }) => (
  <div className="flex h-[22px] shrink-0 items-center justify-between bg-[#002839] px-1 font-['Roboto'] text-[12px] font-medium leading-none text-white">
    <span>{title}</span>
    {toggle && (
      <span>
        selected / <span className="font-normal text-[#7d8f99]">all</span>
      </span>
    )}
  </div>
);

const Head = ({ children, className, line = "short" }: { children?: React.ReactNode; className: string; line?: "short" | "full" }) => (
  <div className={"relative flex shrink-0 items-center pl-[4px] leading-[13px] " + className}>
    {children}
    {line === "short" && <span className="absolute top-1/4 right-0 bottom-1/4 w-px bg-[#d3d7d9]" />}
    {line === "full" && <span className="absolute inset-y-0 right-0 w-px bg-[#bdc3c7]" />}
  </div>
);

const NavItem = ({ children, active, className }: { children: string; active?: boolean; className: string }) => (
  <div className={"flex items-center justify-center border-b-4 pt-1 font-medium " + (active ? "border-[#00a9e0] text-[#333] " : "border-transparent text-[#999] ") + className}>
    {children}
  </div>
);

const Filter = ({ label }: { label: string }) => (
  <div className="flex items-center gap-[5px]">
    <span className="text-white">{label}</span>
    <div className="flex h-[27px] w-[180px] items-center justify-between rounded-[3px] border border-[#b9bfc3] bg-white pr-1 pl-1.5 text-[#444]">
      <span>all selected</span>
      <svg className="mt-[3px] h-[8px] w-[11px]" viewBox="0 0 11 8" fill="none" stroke="#111" strokeWidth="2">
        <path d="M1.500 1.500l4 4.500 4-4.500" />
      </svg>
    </div>
  </div>
);

const Legend = ({ label, range, className }: { label: string; range: string; className: string }) => (
  <div className="flex items-center gap-[5px]">
    <span className="text-[#757575]">{label}</span>
    <span className={"flex h-[19px] items-center justify-center rounded-[3px] text-[11px] " + className}>{range}</span>
  </div>
);

export default function App() {
  return (
    <div className="flex h-[1321px] w-[2559px] flex-col overflow-hidden bg-white font-['Liberation_Sans',sans-serif] text-[11px] text-black">
      {/* top bar */}
      <header className="flex h-[44px] shrink-0 items-center justify-between bg-[#002839] pr-4 pl-[13px] font-['Roboto'] text-[12px] text-white">
        <div className="flex items-center">
          <span className="text-[#dfe5e8]">GRiD</span>
          <span className="mr-[6px] ml-[3px]">/</span>
          <span className="text-[#dfe5e8]">Commodity Risk</span>
          <span className="mr-[6px] ml-[3px]">/</span>
          <span className="font-bold">Dashboard</span>
        </div>
        <div className="flex items-center">
          <span className="font-bold">Neil Smith</span>
          <svg className="ml-[7px] h-[6px] w-[11px]" viewBox="0 0 11 6" fill="none" stroke="#fff" strokeWidth="1.600">
            <path d="M1 .7l4.500 4.300L10 .7" />
          </svg>
          <span className="ml-[12px] flex h-[21px] w-[21px] items-center justify-center rounded-full bg-white text-[17px] font-black leading-none text-[#002839]">?</span>
        </div>
      </header>

      <div className="flex min-h-0 grow">
        {/* side bar */}
        <aside className="w-[47px] shrink-0 border-r border-[#dcdcdc]">
          {icons.map((icon, i) => (
            <div key={i} className={"flex h-12 items-center justify-center pr-px " + (i === 3 ? "bg-[#e1f4fd] text-[#002839]" : "text-[#999]")}>
              <svg className="h-[22px] w-[22px]" viewBox="0 0 22 22" fill="currentColor">
                {icon}
              </svg>
            </div>
          ))}
        </aside>

        <main className="flex min-w-0 grow flex-col">
          <nav className="flex h-[50px] shrink-0 justify-center border-b border-[#dcdcdc] pr-[21px] font-['Roboto'] text-[12px]">
            <NavItem className="-mb-px w-[95px]">INSIGHTS</NavItem>
            <NavItem active className="-mb-px ml-[10px] w-[204px]">COMMODITIES RISK DASHBOARD</NavItem>
          </nav>
          <nav className="flex h-[42px] shrink-0 justify-center pr-[2px] font-['Roboto'] text-[13px]">
            <NavItem active className="w-[112px]">RISK ANALYSIS</NavItem>
            <NavItem className="ml-[10px] w-[126px]">RISK DRIVERS</NavItem>
            <NavItem className="w-[101px]">EVIDENCE</NavItem>
            <NavItem className="w-[67px]">MAP</NavItem>
            <NavItem className="w-[82px]">ABOUT</NavItem>
          </nav>

          <div className="flex h-[47px] shrink-0 items-center justify-between bg-[#002839] pr-[15px] pl-[10px] font-['Roboto'] text-[12px]">
            <div className="flex items-center gap-[15px]">
              <Filter label="Commodity Type" />
              <Filter label="Commodity" />
              <Filter label="Country" />
              <Filter label="Risk Pillars" />
              <Filter label="Risk Issues" />
            </div>
            <button className="h-[27px] w-[65px] rounded-[2px] bg-[#00a9e0] text-white">Reset All</button>
          </div>

          {/* evidence */}
          <section className="mt-[3px] ml-[3px] flex h-[371px] w-[2507px] shrink-0 flex-col">
            <PanelTitle title="Evidence" />
            <div className="flex min-h-0 grow flex-col border border-[#bdc3c7]">
              <div className="flex h-[33px] shrink-0 border-b border-[#bdc3c7] bg-[#f5f7f7] text-[#777]">
                <Head className="w-[105px]">Commodity</Head>
                <Head className="w-[85px]">Country</Head>
                <Head className="w-[95px]" line="full">Risk Issue</Head>
                <Head className="w-[60px] justify-center pr-1 text-center">Risk Issue<br />Score</Head>
                <Head className="w-[238px]">Risk Driver</Head>
                <Head className="w-[952px]">Risk Driver Evidence</Head>
                <Head className="w-[476px]">Risk Driver Source</Head>
                <Head className="w-[477px]">Risk Driver Score</Head>
              </div>
              <div className="flex min-h-0 grow">
                <div className="min-w-0 grow overflow-hidden">
                  {evidence.map((r, i) => (
                    <div key={i} className={"flex border-b border-[#d9dcde] leading-[13px] " + (r.h === "a" ? "h-[41px] " : "h-[38px] ") + (i % 2 ? "bg-[#fcfdfe]" : "bg-white")}>
                      <div className="flex w-[105px] shrink-0 pt-px pl-[7px]">
                        {r.commodity && <><Chevron className="mt-[8px] mr-[5px]" />{r.commodity}</>}
                      </div>
                      <div className="flex w-[85px] shrink-0 pt-px pl-[7px]">
                        {r.country && <><Chevron className="mt-[8px] mr-[5px]" />{r.country}</>}
                      </div>
                      <div className="flex w-[95px] shrink-0 border-r border-[#bdc3c7] pt-px pl-[7px]">
                        {r.issue && <><Chevron className="mt-[8px] mr-[5px]" /><span className="w-[60px]">{r.issue}</span></>}
                      </div>
                      <div className={"w-[60px] shrink-0 pt-px text-center " + scoreBg(r.score)}>{r.score.toFixed(2)}</div>
                      <div className="w-[238px] shrink-0 pt-px pl-[4px]">{r.driver}</div>
                      <div className="w-[952px] shrink-0 pt-px pr-[4px] pl-[4px]">{r.text}</div>
                      <div className="w-[476px] shrink-0 pt-px pr-[100px] pl-[4px]">{r.source}</div>
                      <div className="flex shrink-0 items-center pl-[4px]">
                        <div className={"flex h-[30px] items-center pl-[2px] " + scoreBg(r.value)} style={{ width: Math.max(36, Math.min(468, r.value * 46.8 + 10)) }}>
                          {r.value.toFixed(2)}
                        </div>
                      </div>
                    </div>
                  ))}
                  <div className="flex">
                    <div className="ml-[285px] h-1 w-[60px] bg-[#f47721]" />
                  </div>
                </div>
                <Scrollbar thumb="h-[17px]" />
              </div>
            </div>
          </section>

          {/* lower row */}
          <div className="mt-[3px] ml-[3px] flex h-[735px] shrink-0">
            <section className="flex w-[225px] shrink-0 flex-col">
              <PanelTitle title="Overall Commodity Risk" toggle />
              <div className="flex min-h-0 grow flex-col border border-b-0 border-[#bdc3c7]">
                <div className="flex h-[20px] shrink-0 border-b border-[#bdc3c7] bg-[#f5f7f7] text-[#777]">
                  <Head className="w-[131px]">Commodity</Head>
                  <Head className="w-[75px]">Score</Head>
                </div>
                <div className="flex min-h-0 grow">
                  <div className="min-w-0 grow overflow-hidden">
                    {commodities.map(([n, v]) => (
                      <div key={n} className="flex h-[20px] border-b border-[#d9dcde] leading-[22px]">
                        <div className="h-[19px] w-[131px] shrink-0 border-r border-[#d9dcde] pl-[4px]">{n}</div>
                        <div className={"h-[19px] w-[75px] shrink-0 text-center " + scoreBg(v)}>{v.toFixed(2)}</div>
                      </div>
                    ))}
                  </div>
                  <Scrollbar thumb="h-[137px]" />
                </div>
              </div>
            </section>

            <section className="ml-[3px] flex w-[225px] shrink-0 flex-col">
              <PanelTitle title="Risk Issue" toggle />
              <div className="flex min-h-0 grow flex-col border border-b-0 border-[#bdc3c7]">
                <div className="flex h-[20px] shrink-0 border-b border-[#bdc3c7] bg-[#f5f7f7] text-[#777]">
                  <Head className="w-[120px]">Issue</Head>
                  <Head className="w-[86px]">Score</Head>
                </div>
                <div className="flex min-h-0 grow">
                  <div className="min-w-0 grow overflow-hidden">
                    {issues.map(([n, v]) => (
                      <div key={n} className="flex h-[35px] items-center border-b border-[#d9dcde] leading-[13px]">
                        <div className="flex h-full w-[120px] shrink-0 items-center border-r border-[#d9dcde] pr-1 pl-[4px]">{n}</div>
                        <div className="pl-[3px]">
                          <div className={"flex h-[30px] items-center pl-[2px] " + scoreBg(v)} style={{ width: v * 7.9 + 10 }}>
                            {v.toFixed(2)}
                          </div>
                        </div>
                      </div>
                    ))}
                  </div>
                  <Scrollbar thumb="h-[653px]" />
                </div>
              </div>
            </section>

            <section className="ml-[3px] flex w-[1254px] shrink-0 flex-col">
              <PanelTitle title="Global Risk Outlook" />
              <div className="relative min-h-0 grow overflow-hidden border-x border-[#bdc3c7] bg-[#eee]">
                <WorldMap />
                <div className="absolute top-[9px] left-[9px] flex flex-col gap-px text-center font-bold leading-[16px] text-white">
                  <div className="h-[16px] w-[17px] rounded-t-[2px] bg-[#7f9bc4]">+</div>
                  <div className="h-[17px] w-[17px] rounded-b-[2px] bg-[#7f9bc4]">−</div>
                  <div className="mt-[14px] h-[17px] w-[17px] rounded-[2px] bg-[#7f9bc4] text-[12px]">E</div>
                </div>
              </div>
            </section>

            <section className="ml-[3px] flex w-[794px] shrink-0 flex-col">
              <PanelTitle title="Commodity Risk By Country" toggle />
              <div className="flex min-h-0 grow flex-col border border-b-0 border-[#bdc3c7]">
                <div className="flex h-[39px] shrink-0 border-b border-[#bdc3c7] bg-[#f5f7f7] text-[#777]">
                  <Head className="w-[85px]" line="full">Commodity</Head>
                  <Head className="w-[115px]">Country</Head>
                  <Head className="w-[116px]">Overall Risk</Head>
                  <Head className="w-[115px] justify-center pr-1 text-center">Cross-cutting supply<br />chain risks</Head>
                  <Head className="w-[115px]">Environmental</Head>
                  <Head className="w-[116px]">Political</Head>
                  <Head className="w-[114px]">Social</Head>
                </div>
                <div className="flex min-h-0 grow">
                  <div className="min-w-0 grow overflow-hidden">
                    {countries.map(([c, n, vs], i) => (
                      <div key={i} className="flex h-[21px] border-b border-[#d9dcde] leading-[20px]">
                        <div className="flex w-[85px] shrink-0 items-center border-r border-[#bdc3c7] pl-[7px]">
                          {c && <><Chevron className="mr-[5px]" />{c}</>}
                        </div>
                        <div className="w-[115px] shrink-0 pl-[3px]">{n}</div>
                        <div className={"w-[116px] shrink-0 text-center " + scoreBg(vs[0])}>{n && vs[0].toFixed(2)}</div>
                        <div className={"w-[115px] shrink-0 text-center " + scoreBg(vs[1])}>{n && vs[1].toFixed(2)}</div>
                        <div className={"w-[115px] shrink-0 text-center " + scoreBg(vs[2])}>{n && vs[2].toFixed(2)}</div>
                        <div className={"w-[116px] shrink-0 text-center " + scoreBg(vs[3])}>{n && vs[3].toFixed(2)}</div>
                        <div className={"w-[114px] shrink-0 text-center " + scoreBg(vs[4])}>{n && vs[4].toFixed(2)}</div>
                      </div>
                    ))}
                  </div>
                  <Scrollbar thumb="h-[27px]" />
                </div>
              </div>
            </section>
          </div>

          <footer className="flex h-[26px] shrink-0 items-center justify-end gap-[12px] border-t border-b border-t-[#999] border-b-black pr-[10px] pb-[1px] font-['Roboto'] text-[11.5px]">
            <Legend label="Extreme:" range="0.00-2.50" className="w-[53px] bg-[#e53935] font-medium text-white" />
            <Legend label="High:" range="2.50-5.00" className="w-[53px] bg-[#fb8c00] text-[#5c3a0a]" />
            <Legend label="Medium:" range="5.00-7.50" className="w-[53px] bg-[#fbc02d] text-[#5c4a16]" />
            <Legend label="Low:" range="7.50-10.00" className="w-[59px] bg-[#cddc39] text-[#4a5014]" />
          </footer>
        </main>
      </div>
    </div>
  );
}
